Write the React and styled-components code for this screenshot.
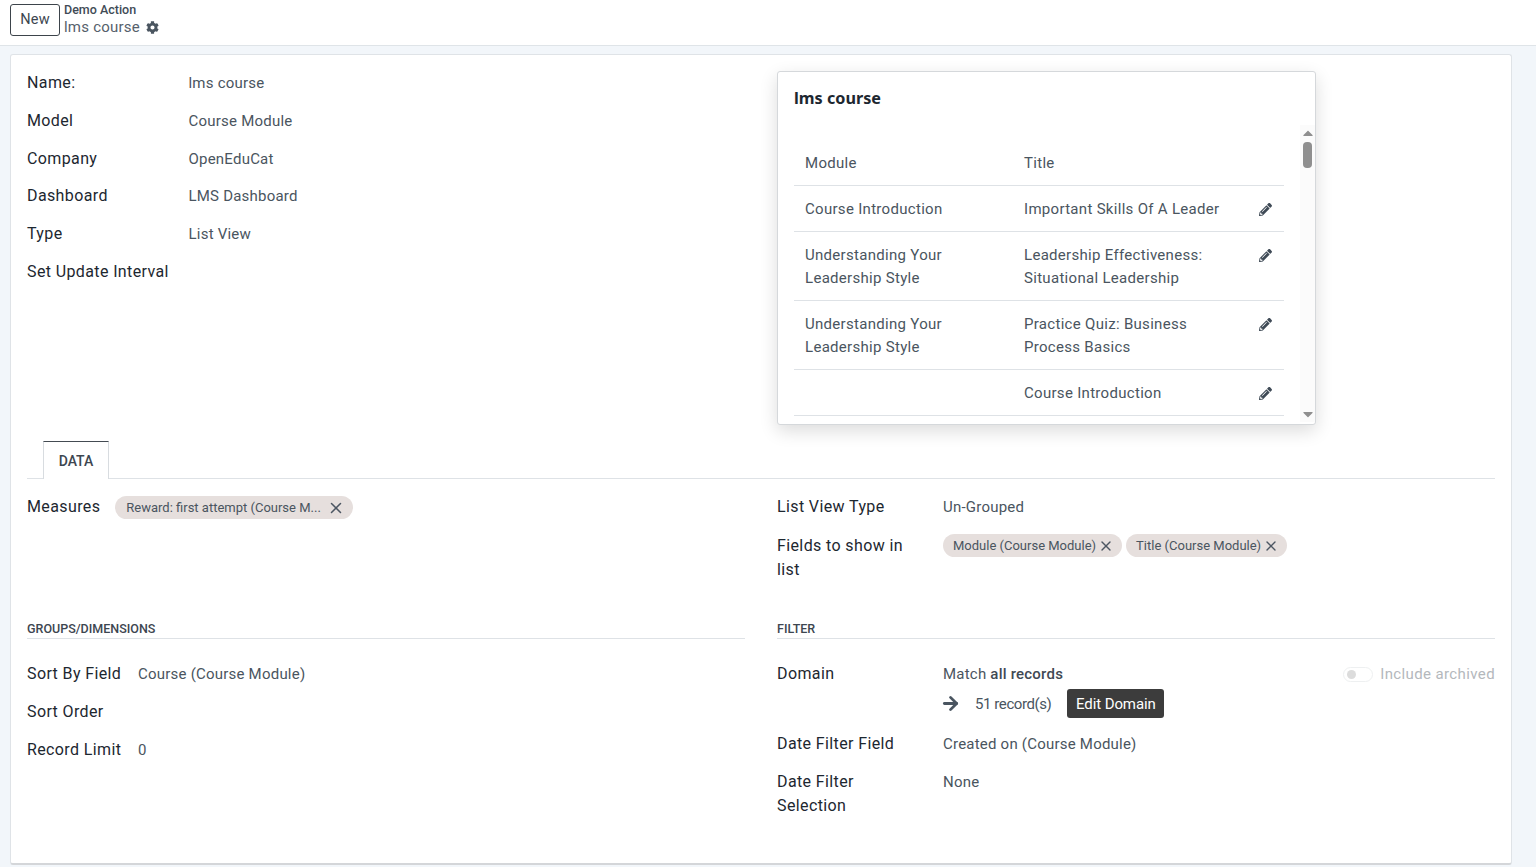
import React from "react";
import styled, { createGlobalStyle } from "styled-components";
import { FaCog, FaPencilAlt, FaCaretUp, FaCaretDown } from "react-icons/fa";
import { X, ArrowRight } from "lucide-react";

const GlobalStyle = createGlobalStyle`
  html, body {
    margin: 0;
    height: 867px;
    overflow: hidden;
    background: #f2f6fa;
    font-family: Roboto, "Liberation Sans", sans-serif;
  }
  * { box-sizing: border-box; }
`;

const rows = [
  { module: ["Course Introduction"], title: ["Important Skills Of A Leader"] },
  { module: ["Understanding Your", "Leadership Style"], title: ["Leadership Effectiveness:", "Situational Leadership"] },
  { module: ["Understanding Your", "Leadership Style"], title: ["Practice Quiz: Business", "Process Basics"] },
  { module: [], title: ["Course Introduction"] },
];

const topFields = [
  ["Name:", "lms course"],
  ["Model", "Course Module"],
  ["Company", "OpenEduCat"],
  ["Dashboard", "LMS Dashboard"],
  ["Type", "List View"],
  ["Set Update Interval", ""],
];

function Chip({ wide, children }) {
  return (
    <ChipBox $wide={wide}>
      <ChipText>{children}</ChipText>
      <X size={wide ? 18 : 16} strokeWidth={2} color="#4c5662" />
    </ChipBox>
  );
}

export default function App() {
  return (
    <>
      <GlobalStyle />
      <Header>
        <NewButton>New</NewButton>
        <Crumbs>
          <CrumbParent>Demo Action</CrumbParent>
          <CrumbCurrent>
            lms course <FaCog size={13} color="#4a5560" />
          </CrumbCurrent>
        </Crumbs>
      </Header>

      <Sheet>
        <TopRow>
          <TopForm>
            {topFields.map(([label, value]) => (
              <React.Fragment key={label}>
                <Label>{label}</Label>
                <Value>{value}</Value>
              </React.Fragment>
            ))}
          </TopForm>

          <PreviewCard>
            <PreviewTitle>lms course</PreviewTitle>
            <ListArea>
              <ListScroll>
                <ListRow>
                  <Cell>Module</Cell>
                  <Cell>Title</Cell>
                  <span />
                </ListRow>
                {rows.map((row, i) => (
                  <ListRow key={i}>
                    <Cell>
                      {row.module.map((line) => (
                        <div key={line}>{line}</div>
                      ))}
                    </Cell>
                    <Cell>
                      {row.title.map((line) => (
                        <div key={line}>{line}</div>
                      ))}
                    </Cell>
                    <PencilCell>
                      <FaPencilAlt size={13} color="#3f4a56" />
                    </PencilCell>
                  </ListRow>
                ))}
              </ListScroll>
              <ScrollBar>
                <FaCaretUp size={16} color="#8f8f8f" />
                <ScrollThumb />
                <ScrollSpace />
                <FaCaretDown size={16} color="#8f8f8f" />
              </ScrollBar>
            </ListArea>
          </PreviewCard>
        </TopRow>

        <TabBar>
          <Tab>DATA</Tab>
        </TabBar>

        <Columns>
          <Column>
            <MeasuresRow>
              <Label>Measures</Label>
              <Chip wide>Reward: first attempt (Course M...</Chip>
            </MeasuresRow>
          </Column>
          <Column>
            <RightForm>
              <Label>List View Type</Label>
              <Value>Un-Grouped</Value>
              <Label>Fields to show in list</Label>
              <Chips>
                <Chip>Module (Course Module)</Chip>
                <Chip>Title (Course Module)</Chip>
              </Chips>
            </RightForm>
          </Column>
        </Columns>

        <Columns $sections>
          <Column>
            <SectionTitle>GROUPS/DIMENSIONS</SectionTitle>
            <GroupForm>
              <Label>Sort By Field</Label>
              <Value>Course (Course Module)</Value>
              <Label>Sort Order</Label>
              <Value />
              <Label>Record Limit</Label>
              <Value>0</Value>
            </GroupForm>
          </Column>
          <Column>
            <SectionTitle>FILTER</SectionTitle>
            <FilterForm>
              <Label>Domain</Label>
              <DomainBox>
                <DomainTop>
                  <Value>
                    Match <strong>all records</strong>
                  </Value>
                  <Archived>
                    <Toggle>
                      <ToggleKnob />
                    </Toggle>
                    Include archived
                  </Archived>
                </DomainTop>
                <DomainActions>
                  <ArrowIcon size={21} strokeWidth={3.2} color="#4a5560" />
                  <RecordCount>51 record(s)</RecordCount>
                  <EditButton>Edit Domain</EditButton>
                </DomainActions>
              </DomainBox>
              <Label>Date Filter Field</Label>
              <Value>Created on (Course Module)</Value>
              <Label>Date Filter Selection</Label>
              <Value>None</Value>
            </FilterForm>
          </Column>
        </Columns>
      </Sheet>
    </>
  );
}

const Header = styled.header`
  height: 46px;
  background: #fff;
  border-bottom: 1px solid #dfe4e8;
  display: flex;
  align-items: flex-start;
  padding: 4px 0 0 10px;
`;

const NewButton = styled.button`
  width: 50px;
  height: 32px;
  background: #fff;
  border: 1px solid #3d444b;
  border-radius: 3px;
  font: 400 14.5px Roboto, sans-serif;
  letter-spacing: 0.2px;
  color: #3d4650;
  padding: 0 0 2px;
`;

const Crumbs = styled.div`
  margin: -1px 0 0 4px;
`;

const CrumbParent = styled.div`
  font-size: 12.5px;
  font-weight: 500;
  line-height: 14px;
  color: #414b56;
`;

const CrumbCurrent = styled.div`
  display: flex;
  align-items: center;
  gap: 6px;
  font-size: 15px;
  letter-spacing: 0.22px;
  line-height: 20px;
  color: #56616c;
`;

const Sheet = styled.main`
  width: 1502px;
  height: 811px;
  margin: 8px 0 0 10px;
  padding: 16px 16px 0;
  background: #fff;
  border: 1px solid #dfe3e7;
  border-bottom: 2px solid #d4d6d9;
  border-radius: 3px;
`;

const TopRow = styled.div`
  display: grid;
  grid-template-columns: 718px 718px;
  column-gap: 32px;
`;

const TopForm = styled.div`
  display: grid;
  grid-template-columns: 161.5px 1fr;
  grid-auto-rows: 24px;
  row-gap: 13.8px;
  align-content: start;
`;

const Label = styled.div`
  font-size: 16px;
  line-height: 24px;
  letter-spacing: 0.38px;
  color: #1d2730;
`;

const Value = styled.div`
  font-size: 15px;
  line-height: 24px;
  letter-spacing: 0.22px;
  color: #4a5560;

  strong {
    font-weight: 500;
    color: #3f4954;
  }
`;

const PreviewCard = styled.section`
  width: 539px;
  height: 354px;
  padding-left: 16px;
  background: #fff;
  border: 1px solid #d5d8db;
  border-radius: 3px;
  box-shadow: 0 6px 18px rgba(0, 0, 0, 0.14);
`;

const PreviewTitle = styled.h3`
  margin: 0;
  padding-top: 15px;
  height: 53px;
  font-family: "Noto Sans", "Open Sans", sans-serif;
  font-size: 16.2px;
  font-weight: 700;
  line-height: 22px;
  color: #1d2730;
`;

const ListArea = styled.div`
  display: flex;
  height: 297px;
`;

const ListScroll = styled.div`
  flex: none;
  width: 490px;
  padding-top: 14.6px;
  overflow: hidden;
`;

const ListRow = styled.div`
  display: grid;
  grid-template-columns: 219px 218px 1fr;
  padding: 12px 0 11px;
  border-bottom: 1px solid #dee2e6;
  font-size: 15px;
  line-height: 22.4px;
  letter-spacing: 0.3px;
  color: #4a5560;
`;

const Cell = styled.div`
  padding-left: 11px;
`;

const PencilCell = styled.div`
  height: 22px;
  display: flex;
  align-items: center;
  justify-content: flex-end;
  padding-right: 12px;
`;

const ScrollBar = styled.div`
  flex: none;
  width: 15px;
  margin-left: 16px;
  background: #fbfbfb;
  display: flex;
  flex-direction: column;
  align-items: center;
`;

const ScrollThumb = styled.div`
  width: 9px;
  height: 26px;
  flex: none;
  margin-top: 1px;
  border-radius: 4px;
  background: #8f8f8f;
`;

const ScrollSpace = styled.div`
  flex: 1;
`;

const TabBar = styled.nav`
  height: 38px;
  margin-top: 16px;
  padding-left: 16px;
  display: flex;
  border-bottom: 1px solid #dee2e6;
`;

const Tab = styled.div`
  width: 66px;
  height: 38px;
  background: #fff;
  border: 1px solid #d8dce0;
  border-top-color: #444b52;
  border-bottom: none;
  text-align: center;
  font-size: 14px;
  font-weight: 500;
  line-height: 38px;
  color: #3d4650;
`;

const Columns = styled.div`
  display: grid;
  grid-template-columns: 718px 718px;
  column-gap: 32px;
  margin-top: ${(p) => (p.$sections ? "38px" : "16px")};
`;

const Column = styled.div`
  min-width: 0;
`;

const MeasuresRow = styled.div`
  display: flex;
  align-items: flex-start;
  gap: 15px;
`;

const ChipBox = styled.span`
  display: inline-flex;
  align-items: center;
  gap: ${(p) => (p.$wide ? "6px" : "2px")};
  height: 23px;
  padding: 0 8px 0 ${(p) => (p.$wide ? "11px" : "10px")};
  margin-top: 1px;
  border-radius: 12px;
  background: #e6dfdd;
`;

const ChipText = styled.span`
  white-space: nowrap;
  font-size: 13px;
  color: #4a5560;
`;

const Chips = styled.div`
  display: flex;
  gap: 4px;
  align-items: flex-start;
  margin-top: -1px;
`;

const RightForm = styled.div`
  display: grid;
  grid-template-columns: 166px 1fr;
  row-gap: 15px;

  ${Label} {
    padding-right: 24px;
  }
`;

const SectionTitle = styled.h4`
  margin: 0 0 23px;
  height: 19px;
  border-bottom: 1px solid #dee2e6;
  font-size: 12.5px;
  font-weight: 500;
  line-height: 18px;
  color: #3d4650;
`;

const GroupForm = styled.div`
  display: grid;
  grid-template-columns: 111px 1fr;
  grid-auto-rows: 24px;
  row-gap: 14px;
`;

const FilterForm = styled.div`
  display: grid;
  grid-template-columns: 166px 1fr;
  row-gap: 14px;

  ${Label} {
    padding-right: 24px;
  }
`;

const DomainBox = styled.div`
  display: flex;
  flex-direction: column;
  gap: 3px;
`;

const DomainTop = styled.div`
  display: flex;
  justify-content: space-between;
  align-items: center;
`;

const Archived = styled.div`
  display: flex;
  align-items: center;
  gap: 7px;
  font-size: 15px;
  letter-spacing: 0.38px;
  color: #b4b8bc;
`;

const Toggle = styled.span`
  width: 30px;
  height: 15px;
  padding: 2px 3px;
  border: 1px solid #eef0f1;
  border-radius: 8px;
  background: #fff;
`;

const ToggleKnob = styled.span`
  display: block;
  width: 9px;
  height: 9px;
  border-radius: 50%;
  background: #dcdcdc;
`;

const DomainActions = styled.div`
  display: flex;
  align-items: center;
`;

const ArrowIcon = styled(ArrowRight)`
  margin-left: -3px;
`;

const RecordCount = styled.span`
  margin-left: 14px;
  font-size: 15px;
  letter-spacing: -0.42px;
  color: #4a5560;
`;

const EditButton = styled.button`
  margin-left: 16px;
  width: 97px;
  height: 29px;
  padding: 0;
  border: none;
  border-radius: 3px;
  background: #3c3c3c;
  font: 400 15px Roboto, sans-serif;
  letter-spacing: -0.1px;
  color: #fff;
`;
